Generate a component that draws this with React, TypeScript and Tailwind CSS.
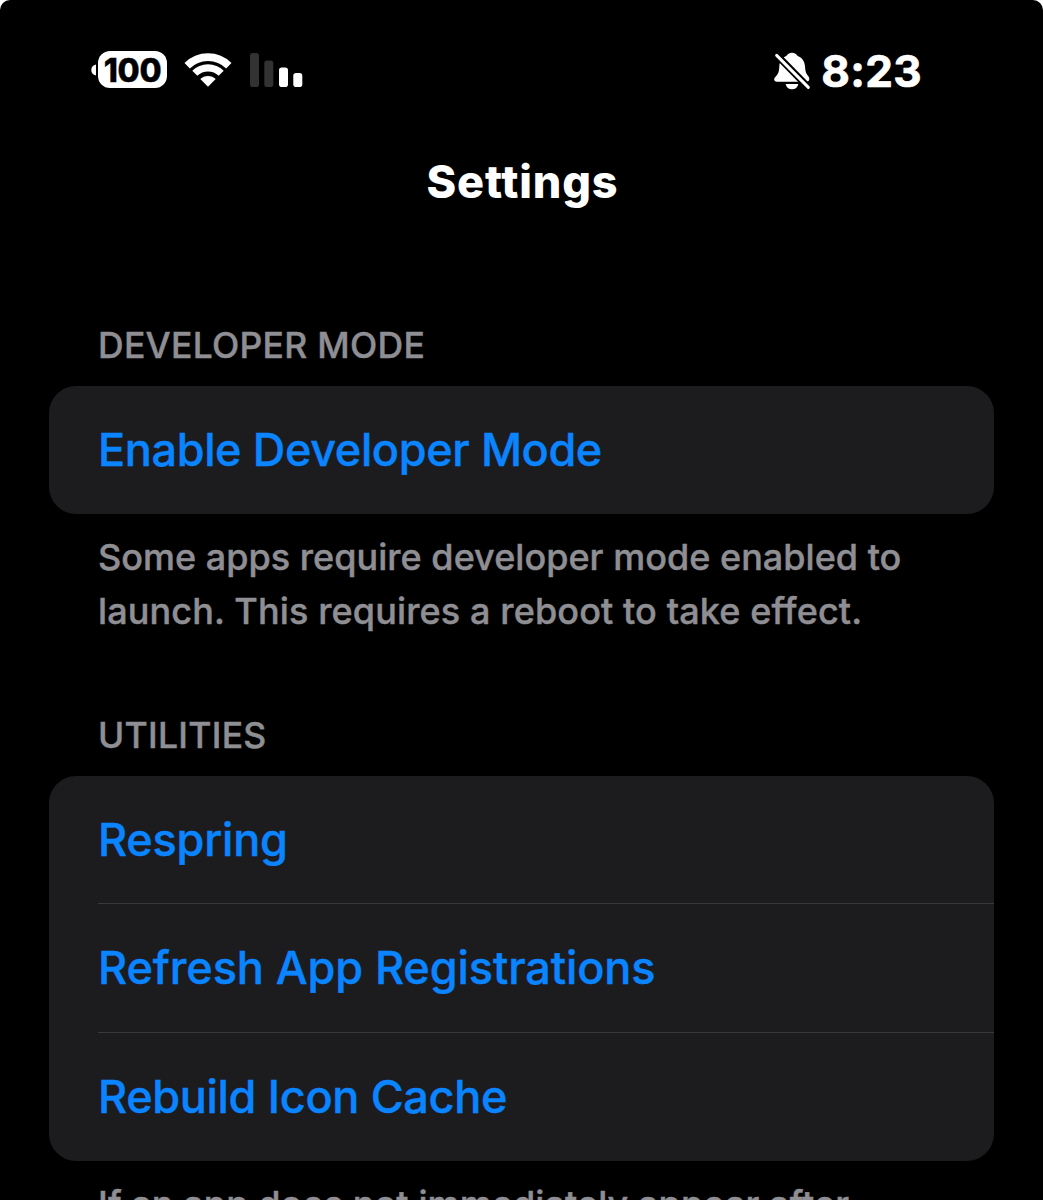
const sections = [
    {
        title: "DEVELOPER MODE",
        rows: [{ label: "Enable Developer Mode", tracking: "tracking-[-0.36px]" }],
        footer: [
            { text: "Some apps require developer mode enabled to", tracking: "tracking-[0.02px]" },
            { text: "launch. This requires a reboot to take effect.", tracking: "tracking-[0.12px]" },
        ],
    },
    {
        title: "UTILITIES",
        rows: [
            { label: "Respring", tracking: "tracking-[-0.2px]" },
            { label: "Refresh App Registrations", tracking: "tracking-[-0.08px]" },
            { label: "Rebuild Icon Cache", tracking: "tracking-[-0.32px]" },
        ],
        footer: [{ text: "If an app does not immediately appear after", tracking: "tracking-[0.09px]" }],
    },
];

function Battery() {
    return (
        <div className="flex items-center gap-[1.5px]">
            <svg width="5" height="12" viewBox="0 0 5 12" fill="white">
                <path d="M5 0.5C1.8 1.2 0.3 3.3 0.3 6s1.5 4.8 4.7 5.5z" />
            </svg>
            <div className="flex h-[37px] w-[69px] items-center justify-center rounded-[12px] bg-white pt-[3px] pl-px text-[32px] leading-none font-extrabold tracking-[-0.3px] text-black [-webkit-text-stroke:0.4px]">
                100
            </div>
        </div>
    );
}

function Wifi() {
    return (
        <svg width="48" height="36" viewBox="0 0 48 36" fill="none">
            <path d="M3.2 13.7A29.4 29.4 0 0 1 44.8 13.7" stroke="white" strokeWidth="7.6" />
            <path d="M10.8 21.3A18.7 18.7 0 0 1 37.2 21.3" stroke="white" strokeWidth="7.2" />
            <path d="M24 34.8L16.3 27.1A11 11 0 0 1 31.7 27.1Z" fill="white" />
        </svg>
    );
}

function Signal() {
    return (
        <svg width="54" height="36" viewBox="0 0 54 36">
            <rect x="1" y="1" width="9" height="34" rx="2.8" fill="#323232" />
            <rect x="15.3" y="8.5" width="9" height="26.5" rx="2.8" fill="#323232" />
            <rect x="30" y="15.5" width="9" height="19.5" rx="2.8" fill="white" />
            <rect x="44.3" y="21" width="9" height="14" rx="2.8" fill="white" />
        </svg>
    );
}

function BellSlash() {
    return (
        <svg width="38" height="40" viewBox="0 0 114 120" fill="white">
            <path d="M57 8c8 0 14 4 17 10c13 5 21 15 22 31c1 16 3 22 10 30c5 6 4 16-5 16H12c-9 0-11-8-5-14c8-8 11-13 12-32c1-16 8-26 21-31c3-6 9-10 17-10z" />
            <path d="M38 102h38c-2 10-9 16-19 16s-17-6-19-16z" />
            <path d="M2 6L112 118" stroke="black" strokeWidth="21" />
            <path d="M11 16L106 112" stroke="white" strokeWidth="9" strokeLinecap="round" />
        </svg>
    );
}

export default function App() {
    return (
        <div className="h-[1200px] w-[1043px] overflow-hidden bg-white font-['Inter',sans-serif]">
            <main className="h-full overflow-hidden rounded-t-[10px] bg-black">
                <header className="flex h-[139px] items-center justify-between pr-[121px] pl-[91px]">
                    <div className="flex items-center">
                        <Battery />
                        <div className="ml-[17px]"><Wifi /></div>
                        <div className="ml-[17px]"><Signal /></div>
                    </div>
                    <div className="flex items-center gap-[10px]">
                        <BellSlash />
                        <span className="pt-[3px] text-[44px] leading-none font-bold tracking-[0.3px] text-white [-webkit-text-stroke:0.7px]">8:23</span>
                    </div>
                </header>
                <h1 className="mt-[15px] pl-[2px] text-center text-[45px] leading-[56px] font-extrabold tracking-[0.85px] text-white">Settings</h1>
                <div className="mt-[114px] flex flex-col gap-[76.7px] px-[49px] [-webkit-text-stroke:0.45px]">
                    {sections.map((section) => (
                        <section key={section.title}>
                            <h2 className="pl-[49px] text-[35.5px] leading-[44px] font-medium tracking-[0.28px] text-[#8e8e93]">{section.title}</h2>
                            <ul className="mt-[18px] overflow-hidden rounded-[27px] bg-[#1c1c1e] pb-[0.7px]">
                                {section.rows.map((row, index) => (
                                    <li key={row.label} className="pl-[49px]">
                                        {index > 0 && <div className="h-px bg-[#38383a]" />}
                                        <p className={`flex h-[127.3px] items-center text-[45px] font-medium text-[#0a84ff] ${row.tracking}`}>
                                            {row.label}
                                        </p>
                                    </li>
                                ))}
                            </ul>
                            <div className="mt-[17px] -mb-px pl-[49px] text-[36px] leading-[53.7px] font-medium whitespace-nowrap text-[#8e8e93]">
                                {section.footer.map((line) => (
                                    <p key={line.text} className={line.tracking}>{line.text}</p>
                                ))}
                            </div>
                        </section>
                    ))}
                </div>
            </main>
        </div>
    );
}
